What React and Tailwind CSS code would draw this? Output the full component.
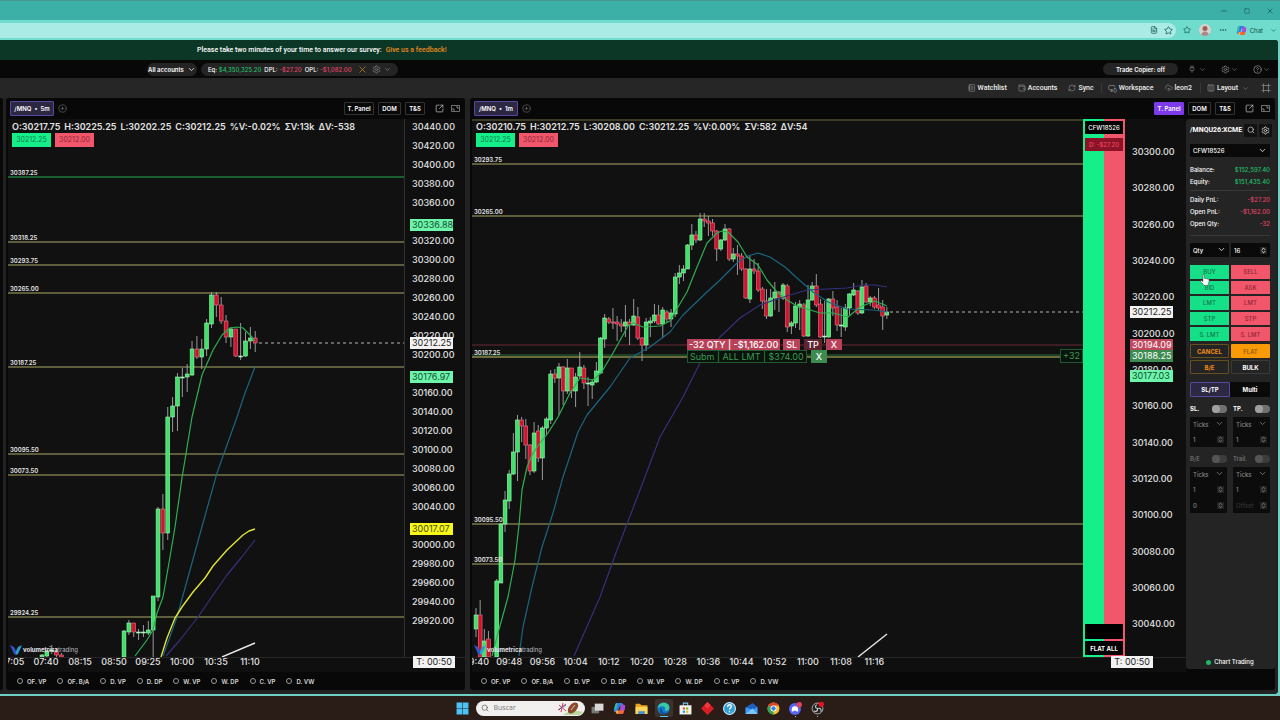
import React, { useState } from "react";
import {
  ChevronDown,
  ChevronsUpDown,
  CircleHelp,
  CirclePlus,
  CloudUpload,
  Columns3,
  Ellipsis,
  FileText,
  Minus,
  MonitorSmartphone,
  NotebookText,
  Plug,
  RefreshCw,
  Search,
  Settings,
  Square,
  SquareArrowOutUpRight,
  Star,
  Wallet,
  X,
} from "lucide-react";

// candle: [top, bottom, high, low, direction]
const leftCandles = [
  [631, 657, 630, 657, 1],
  [623, 632, 620, 635, 1],
  [623, 632, 623, 637, 0],
  [632, 633, 629, 640, 2],
  [632, 633, 625, 637, 2],
  [630, 633, 621, 635, 1],
  [596, 630, 596, 657, 1],
  [509, 597, 507, 601, 1],
  [509, 533, 494, 550, 0],
  [417, 533, 407, 540, 1],
  [406, 417, 397, 432, 1],
  [377, 406, 373, 431, 1],
  [377, 378, 368, 397, 2],
  [374, 377, 364, 392, 1],
  [349, 375, 341, 376, 1],
  [349, 357, 336, 359, 0],
  [349, 357, 339, 369, 1],
  [323, 349, 319, 356, 1],
  [295, 324, 292, 328, 1],
  [295, 305, 292, 317, 0],
  [305, 321, 297, 324, 0],
  [321, 337, 315, 343, 0],
  [329, 337, 327, 347, 1],
  [329, 356, 329, 357, 0],
  [356, 357, 323, 360, 2],
  [341, 356, 332, 357, 1],
  [338, 341, 327, 349, 1],
  [338, 343, 331, 352, 0],
];

const earlyCandles = [
  [655, 657, 654, 657, 1],
  [651, 656, 650, 657, 1],
  [650, 651, 645, 654, 2],
  [652, 655, 650, 657, 0],
  [655, 657, 653, 657, 0],
];

const rightCandles = [
  [615, 629, 608, 637, 1],
  [615, 657, 600, 657, 0],
  [641, 657, 629, 657, 1],
  [639, 657, 631, 657, 0],
  null,
  [581, 657, 579, 657, 1],
  [524, 583, 523, 583, 1],
  [500, 524, 491, 532, 1],
  [474, 501, 470, 509, 1],
  [452, 474, 433, 475, 1],
  [420, 452, 415, 481, 1],
  [420, 426, 417, 442, 0],
  [426, 445, 419, 459, 0],
  [445, 471, 444, 475, 0],
  [433, 471, 422, 473, 1],
  [431, 458, 425, 462, 0],
  [428, 458, 426, 480, 1],
  [419, 428, 417, 435, 1],
  [374, 420, 370, 424, 1],
  [374, 378, 369, 383, 0],
  [367, 378, 363, 415, 1],
  [367, 391, 366, 405, 0],
  [368, 391, 359, 394, 1],
  [368, 391, 368, 398, 0],
  [377, 391, 373, 407, 1],
  [367, 376, 352, 378, 1],
  [368, 383, 365, 389, 0],
  [383, 384, 377, 406, 2],
  [382, 385, 379, 399, 1],
  [371, 382, 362, 383, 1],
  [338, 373, 337, 373, 1],
  [318, 339, 314, 348, 1],
  [319, 322, 317, 324, 0],
  [322, 323, 308, 329, 0],
  [322, 324, 316, 341, 0],
  [324, 326, 319, 332, 0],
  [322, 326, 305, 337, 1],
  [322, 325, 319, 345, 0],
  [316, 325, 299, 326, 1],
  [317, 338, 307, 340, 0],
  [338, 345, 337, 361, 0],
  [322, 345, 318, 351, 1],
  [321, 323, 317, 337, 1],
  [315, 321, 304, 323, 1],
  [315, 324, 305, 325, 0],
  [310, 324, 307, 338, 1],
  [312, 319, 310, 323, 0],
  [313, 319, 309, 327, 1],
  [277, 314, 273, 317, 1],
  [273, 277, 265, 284, 1],
  [269, 273, 265, 281, 1],
  [245, 269, 244, 269, 1],
  [235, 245, 224, 250, 1],
  [235, 240, 231, 243, 0],
  [219, 240, 213, 241, 1],
  [219, 221, 213, 227, 0],
  [221, 223, 216, 236, 0],
  [223, 231, 219, 236, 0],
  [231, 249, 230, 261, 0],
  [240, 249, 239, 251, 1],
  [229, 240, 224, 241, 1],
  [229, 259, 228, 261, 0],
  [254, 259, 248, 262, 1],
  [254, 256, 245, 275, 0],
  [256, 269, 253, 271, 0],
  [269, 298, 268, 299, 0],
  [269, 299, 256, 303, 1],
  [269, 271, 259, 274, 0],
  [271, 290, 263, 292, 0],
  [289, 301, 287, 309, 0],
  [301, 316, 289, 319, 0],
  [298, 316, 289, 317, 1],
  [292, 298, 282, 310, 1],
  [292, 298, 291, 312, 0],
  [285, 298, 283, 300, 1],
  [286, 327, 284, 332, 0],
  [323, 326, 321, 334, 1],
  [306, 323, 302, 328, 1],
  [304, 307, 300, 330, 1],
  [305, 336, 303, 337, 0],
  [300, 336, 285, 337, 1],
  [286, 300, 282, 301, 1],
  [286, 305, 274, 307, 0],
  [304, 337, 299, 338, 0],
  [336, 337, 301, 343, 2],
  [299, 337, 298, 338, 1],
  [299, 308, 291, 316, 0],
  [307, 325, 300, 331, 0],
  [325, 326, 308, 337, 2],
  [308, 327, 304, 331, 1],
  [294, 308, 293, 315, 1],
  [290, 295, 283, 296, 1],
  [291, 313, 290, 315, 0],
  [287, 313, 280, 314, 1],
  [286, 302, 283, 303, 0],
  [298, 302, 296, 306, 1],
  [298, 307, 296, 309, 0],
  [305, 308, 288, 310, 0],
  [307, 316, 300, 330, 0],
  [312, 315, 307, 319, 1],
];

const leftLines = [
  { color: "#2fae52", width: 1.2, points: "135,656 147,640 153,630 157,613 163,597 170,557 175,527 182,478 192,417 202,375 213,350 222,335 230,328 237,327 243,328 252,337 255,341" },
  { color: "#1c6580", width: 1.2, points: "163,656 177,617 190,570 203,523 217,473 237,417 245,393 255,367" },
  { color: "#35307c", width: 1.2, points: "166,656 180,640 198,617 213,595 227,575 241,558 255,540" },
  { color: "#e3e337", width: 1.4, points: "161,657 167,638 175,618 182,607 193,592 205,578 213,566 227,550 243,535 249,531 255,529" },
  { color: "#e8e8e8", width: 1.4, points: "222,657 255,643" },
];

const rightLines = [
  { color: "#35307c", width: 1.2, points: "574,656 600,597 617,550 640,490 660,437 683,397 700,363 720,337 740,318 760,305 780,298 807,290 847,288 863,285 875,285 887,287" },
  { color: "#1c6580", width: 1.2, points: "519,656 523,627 532,587 542,547 553,513 563,477 578,432 587,415 610,387 630,358 650,347 670,332 683,315 707,292 720,280 738,262 748,256 758,253 770,257 785,267 797,278 813,292 828,302 847,309 873,310 887,312" },
  { color: "#2fae52", width: 1.2, points: "492,656 498,633 508,597 515,560 519,525 522,490 527,467 533,453 540,443 548,433 558,417 570,393 580,378 593,380 601,373 613,353 628,326 633,323 643,327 660,326 670,321 675,312 687,292 697,267 707,243 717,233 722,231 728,232 738,242 747,257 758,265 767,280 777,292 787,300 797,306 807,309 820,313 833,313 848,317 860,307 875,301 887,306" },
  { color: "#e8e8e8", width: 1.4, points: "858,657 887,634" },
];

const leftLevels = [
  { price: "30387.25", y: 177, color: "#1d7a3e" },
  { price: "30318.25", y: 242, color: "#77774a" },
  { price: "30293.75", y: 265, color: "#77774a" },
  { price: "30265.00", y: 293, color: "#77774a" },
  { price: "30187.25", y: 367, color: "#77774a" },
  { price: "30095.50", y: 454, color: "#77774a" },
  { price: "30073.50", y: 475, color: "#77774a" },
  { price: "29924.25", y: 617, color: "#77774a" },
];

const rightLevels = [
  { price: "", y: 120, color: "#4c4930" },
  { price: "30293.75", y: 164, color: "#77774a" },
  { price: "30265.00", y: 216, color: "#77774a" },
  { price: "30187.25", y: 357, color: "#8a8a4e" },
  { price: "30095.50", y: 524, color: "#77774a" },
  { price: "30073.50", y: 564, color: "#77774a" },
];

const leftTags = [
  { price: "30336.88", y: 225, bg: "#6df5ab", text: "#11502f" },
  { price: "30212.25", y: 343, bg: "#f2f2f2", text: "#222222" },
  { price: "30176.97", y: 377, bg: "#6df5ab", text: "#11502f" },
  { price: "30017.07", y: 529, bg: "#f7f71a", text: "#4a4a10" },
];

const rightTags = [
  { price: "30212.25", y: 312, bg: "#f2f2f2", text: "#222222" },
  { price: "30194.09", y: 345, bg: "#c0475d", text: "#ffffff" },
  { price: "30188.25", y: 356, bg: "#3c8b50", text: "#ffffff" },
  { price: "30177.03", y: 376, bg: "#6df5ab", text: "#11502f" },
];

const leftTimes = ["07:05", "07:40", "08:15", "08:50", "09:25", "10:00", "10:35", "11:10"];
const rightTimes = ["09:40", "09:48", "09:56", "10:04", "10:12", "10:20", "10:28", "10:36", "10:44", "10:52", "11:00", "11:08", "11:16"];
const studies = ["OF. VP", "OF. B/A", "D. VP", "D. DP", "W. VP", "W. DP", "C. VP", "D. VW"];

const Candles = ({ data, start, step }) =>
  data.map((c, i) => {
    if (!c) return null;
    const [top, bottom, high, low, dir] = c;
    const x = start + i * step;
    const fill = ["#d0122f", "#3fe268", "#e8e8e8"][dir];
    return (
      <g key={i}>
        <line x1={x} x2={x} y1={high} y2={low} stroke="#a9a9a9" strokeWidth="0.9" />
        <rect x={x - 1.9} y={top} width="3.8" height={Math.max(bottom - top, 1)} fill={fill} stroke={dir === 0 ? "#e27a8a" : "#a0f5b4"} strokeWidth="0.6" />
      </g>
    );
  });

const PlotSvg = ({ originX, levels, lines, lastX, lastY, children }) => (
  <svg className="absolute inset-0 h-full w-full overflow-hidden" aria-hidden="true">
    <g transform={`translate(${-originX}, -119)`}>
      {levels.map((l) => (
        <line key={l.y} x1={originX} x2="200%" y1={l.y} y2={l.y} stroke={l.color} strokeWidth="1.5" />
      ))}
      {children}
      {lines.map((l, i) => (
        <polyline key={i} points={l.points} fill="none" stroke={l.color} strokeWidth={l.width} strokeLinejoin="round" />
      ))}
      {levels.map((l) => (
        <text key={l.y} x={originX + 2} y={l.y - 2} fill="#e6e6e6" className="font-[Inter] text-[6px] font-semibold">
          {l.price}
        </text>
      ))}
      <line x1={lastX} x2="200%" y1={lastY} y2={lastY} stroke="#b5b5b5" strokeDasharray="3 3" />
    </g>
  </svg>
);

const PriceAxis = ({ from, to, firstY, pitch, tags }) => {
  const labels = [];
  for (let p = from; p >= to; p -= 20) {
    const y = firstY + (from - p) * pitch;
    // a label that lies right under a tag is not drawn
    if (!tags.some((t) => Math.abs(t.y - y) < 4)) {
      labels.push({ price: p.toFixed(2), y });
    }
  }
  return (
    <svg className="h-full w-full font-[Inter] text-[9px]" aria-hidden="true">
      <g transform="translate(0, -119)">
        {labels.map((l) => (
          <text key={l.price} x="7" y={l.y + 3} fill="#e2e2e2" className="font-medium">
            {l.price}
          </text>
        ))}
        {tags.map((t) => (
          <g key={t.price}>
            <rect x="5" y={t.y - 6} width="43" height="12" fill={t.bg} />
            <text x="7" y={t.y + 3} fill={t.text}>
              {t.price}
            </text>
          </g>
        ))}
      </g>
    </svg>
  );
};

const TimeAxis = ({ times, first, step, tagClass }) => (
  <div className="relative h-[15px] shrink-0 border-t border-[#262626] bg-[#0f0f0f]">
    <div className="h-full overflow-x-clip">
      <svg className="h-full w-full overflow-visible font-[Inter] text-[9px] font-medium" aria-hidden="true">
        {times.map((t, i) => (
          <text key={t} x={first + i * step} y="7" textAnchor="middle" fill="#e2e2e2">
            {t}
          </text>
        ))}
      </svg>
    </div>
    <span className={`absolute -top-[2px] bg-[#f2f2f2] px-[3px] text-[9px] leading-[12px] text-[#222] ${tagClass}`}>T: 00:50</span>
  </div>
);

const Ohlc = ({ values }) => (
  <div className="relative flex gap-[4px] pl-[4px] pt-[2px] text-[9px] font-semibold leading-[12px] text-[#e4e4e4]">
    {values.map((v) => (
      <span key={v}>{v}</span>
    ))}
  </div>
);

const BidAsk = () => (
  <div className="relative flex gap-[4px] pl-[4px] text-[7px] leading-[14px]">
    <span className="w-[39px] bg-[#14ef8a] text-center text-[#147a4a]">30212.25</span>
    <span className="w-[39px] bg-[#f2566a] text-center text-[#8f2636]">30212.00</span>
  </div>
);

const Brand = () => (
  <div className="absolute bottom-[2px] left-[2px] flex items-center gap-[1px] text-[6px] leading-[10px] text-[#b9bcc4]">
    <svg viewBox="0 0 12 10" className="h-[10px] w-3" aria-hidden="true">
      <path d="M0 0 L4 2 L6 6 L6 10 L4 9 Z" fill="#2f55c8" />
      <path d="M12 0 L8 2 L6 6 L6 10 L8 9 Z" fill="#2e9bd0" />
    </svg>
    <span>
      <b className="text-[#e2e4ea]">volumetrica</b>trading
    </span>
  </div>
);

const PanelHeader = ({ frame, active }) => {
  const base = "h-[13px] rounded-[1px] border text-center text-[6px] font-semibold leading-[11px] text-white";
  return (
    <div className="flex h-[21px] shrink-0 items-center pl-[4px] pr-[5px]">
      <button className="h-[15px] w-[44px] rounded-[1px] border border-[#5a46a0] bg-[#2d2842] text-[6px] font-semibold text-white">
        /MNQ&nbsp; • &nbsp;{frame}
      </button>
      <button aria-label="Add chart" className="ml-[4px] text-[#777]">
        <CirclePlus size={9} strokeWidth={1.5} />
      </button>
      <div className="ml-auto flex items-center gap-[4px]">
        <button className={`w-[30px] ${active ? `${base} border-[#7c3aed] bg-[#7c3aed]` : `${base} border-[#333]`}`}>T. Panel</button>
        <button className={`w-[23px] ${base} border-[#333]`}>DOM</button>
        <button className={`w-[20px] ${base} border-[#333]`}>T&amp;S</button>
        <button aria-label="Pop out" className="ml-[6px] text-[#bbb]">
          <SquareArrowOutUpRight size={9} strokeWidth={2} />
        </button>
        <button aria-label="Maximize" className="ml-[3px] text-[#999]">
          <svg viewBox="0 0 9 9" className="size-[9px]" fill="none" stroke="currentColor" aria-hidden="true">
            <path d="M0.500 1.500h8v6h-8Z" strokeWidth="0.7" />
            <path d="M5 3h2v2M4 6H2V4" strokeWidth="0.8" />
          </svg>
        </button>
      </div>
    </div>
  );
};

const PanelFooter = ({ id }) => (
  <div className="flex h-[18px] shrink-0 items-center gap-[11px] pl-[11px] text-[6px] font-semibold text-[#d8d8d8]">
    {studies.map((s) => (
      <label key={s} htmlFor={`${id}-${s}`} className="flex items-center gap-[4px]">
        <input id={`${id}-${s}`} type="checkbox" className="size-[6px] appearance-none rounded-full border border-[#999]" />
        {s}
      </label>
    ))}
  </div>
);

const Picker = ({ label, value, className }) => (
  <div className={`relative ${className}`}>
    <select aria-label={label} className="h-full w-full appearance-none bg-transparent pl-[3px] outline-none">
      <option>{value}</option>
    </select>
    <ChevronDown size={9} strokeWidth={2} className="pointer-events-none absolute right-[3px] top-[2px]" />
  </div>
);

const NumberBox = ({ label, value, placeholder }) => {
  const [val, setVal] = useState(value);
  return (
    <div className="flex h-[14px] items-center pl-[3px] pr-[3px]">
      <input
        type="text"
        inputMode="numeric"
        aria-label={label}
        value={val}
        placeholder={placeholder}
        onChange={(e) => setVal(e.target.value)}
        className="w-full min-w-0 bg-transparent outline-none placeholder:text-[#333]"
      />
      <ChevronsUpDown size={7} strokeWidth={3} className="shrink-0 bg-[#222]" />
    </div>
  );
};

const Toggle = ({ label, dim }) => (
  <label className={dim ? "flex items-center justify-between text-[#777]" : "flex items-center justify-between text-white"}>
    {label}
    <span className="relative flex h-2 w-[15px]">
      <input type="checkbox" className={`h-2 w-[15px] appearance-none rounded-full ${dim ? "bg-[#3c3c3c]" : "bg-[#707070]"}`} />
      <span className={`pointer-events-none absolute left-0 top-0 size-2 rounded-full ${dim ? "bg-[#555]" : "bg-[#a0a0a0]"}`} />
    </span>
  </label>
);

const Row = ({ label, value, color }) => (
  <div className="flex h-3 items-center justify-between">
    <dt className="text-white">{label}</dt>
    <dd className={color}>{value}</dd>
  </div>
);

const TradePanel = () => {
  const sides = [
    ["BUY", "SELL"],
    ["BID", "ASK"],
    ["LMT", "LMT"],
    ["STP", "STP"],
    ["S. LMT", "S. LMT"],
  ];
  return (
    <aside className="relative mb-[3px] flex w-[89px] shrink-0 flex-col rounded-[3px] bg-[#242424] pl-[4px] pr-[5px] pt-[4px] text-[6px] font-medium text-[#ddd]">
      <div className="flex h-[14px] items-center gap-[2px]">
        <b className="flex-1 whitespace-nowrap font-[Roboto] text-[7px] font-bold text-white">/MNQU26:XCME</b>
        <button aria-label="Search symbol" className="flex size-[13px] shrink-0 items-center justify-center bg-[#111]">
          <Search size={8} />
        </button>
        <button aria-label="Panel settings" className="flex size-[13px] shrink-0 items-center justify-center bg-[#111]">
          <Settings size={9} strokeWidth={2} />
        </button>
      </div>
      <Picker label="Account" value="CFW18526" className="mt-[7px] h-[13px] bg-[#0a0a0a] text-white" />
      <dl className="mt-[6px] border-b border-[#383838] pb-[3px]">
        <Row label="Balance:" value="$152,597.40" color="text-[#22c06a]" />
        <Row label="Equity:" value="$151,435.40" color="text-[#22c06a]" />
      </dl>
      <dl className="mt-[2px] border-b border-[#383838] pb-[6px]">
        <Row label="Daily PnL:" value="-$27.20" color="text-[#e8456a]" />
        <Row label="Open PnL:" value="-$1,162.00" color="text-[#e8456a]" />
        <Row label="Open Qty:" value="-32" color="text-[#e8456a]" />
      </dl>
      <div className="mt-[7px] grid grid-cols-2 gap-[2px] text-white">
        <Picker label="Quantity type" value="Qty" className="h-[14px] bg-[#0a0a0a]" />
        <div className="bg-[#0a0a0a]">
          <NumberBox label="Quantity" value="16" />
        </div>
      </div>
      <div className="mt-[8px] grid h-[76px] grid-cols-2 gap-[2px]">
        {sides.map(([buy, sell], i) => (
          <React.Fragment key={i}>
            <button className="bg-[#16e087] text-[#12774a]">{buy}</button>
            <button className="bg-[#f2566a] text-[#8f2636]">{sell}</button>
          </React.Fragment>
        ))}
      </div>
      <div className="mt-[3px] grid grid-cols-2 gap-[2px] font-bold">
        <button className="h-[14px] rounded-[1px] border border-[#66501c] text-[#f08c1a]">CANCEL</button>
        <button className="h-[14px] rounded-[1px] bg-[#f99a07] font-medium text-[#8a5200]">FLAT</button>
        <button className="h-[14px] rounded-[1px] border border-[#66501c] text-[#f08c1a]">B/E</button>
        <button className="h-[14px] rounded-[1px] border border-[#3a3a3a] text-white">BULK</button>
      </div>
      <div className="mt-[8px] grid grid-cols-2 font-bold text-white">
        <button className="h-[15px] rounded-[1px] border border-[#5a46a0] bg-[#2d2842]">SL/TP</button>
        <button className="h-[15px] bg-[#0a0a0a]">Multi</button>
      </div>
      <div className="mt-[8px] grid grid-cols-2 gap-[6px] font-bold leading-[8px]">
        <Toggle label="SL." />
        <Toggle label="TP." />
      </div>
      <div className="mt-[4px] grid grid-cols-2 gap-[6px] text-[#888]">
        {["SL", "TP"].map((n) => (
          <div key={n} className="bg-[#0c0c0c] pb-[1px]">
            <Picker label={`${n} unit`} value="Ticks" className="h-[15px]" />
            <NumberBox label={`${n} ticks`} value="1" />
          </div>
        ))}
      </div>
      <div className="mt-[8px] grid grid-cols-2 gap-[6px] leading-[8px]">
        <Toggle label="B/E" dim />
        <Toggle label="Trail." dim />
      </div>
      <div className="mt-[4px] grid grid-cols-2 gap-[6px] text-[#888]">
        {["B/E", "Trail"].map((n, i) => (
          <div key={n} className="bg-[#0c0c0c] pb-[1px]">
            <Picker label={`${n} unit`} value="Ticks" className="h-[15px]" />
            <NumberBox label={`${n} ticks`} value="1" />
            <div className="pt-[2px]">
              <NumberBox label={`${n} offset`} value={i ? "" : "0"} placeholder="Offset" />
            </div>
          </div>
        ))}
      </div>
      <div className="mt-auto flex items-center justify-center gap-[3px] pb-[3px] text-white leading-[8px]">
        <span className="size-[5px] rounded-full bg-[#1fb866]" />
        Chart Trading
      </div>
      <svg viewBox="0 0 12 14" className="pointer-events-none absolute left-[14px] top-[155px] h-3 w-[10px]" aria-hidden="true">
        <path d="M3.500 1.200c0-1 1.700-1 1.700 0V5l4.600.9c1 .2 1.400.8 1.200 1.800L10.300 11 9.500 13.500H4.800L1 8.800c-.7-1 .5-1.700 1.300-1l1.200 1.100Z" fill="#fff" stroke="#333" strokeWidth="0.6" />
      </svg>
    </aside>
  );
};

const Ladder = () => (
  <div className="flex w-[42px] shrink-0 flex-col bg-[linear-gradient(90deg,#14ef8a_50%,#f2566a_50%)] px-[2px] pb-[2px] pt-[2px] text-center text-[6px] font-medium">
    <div className="h-[13px] bg-black leading-[13px] text-white">CFW18526</div>
    <div className="mt-[4px] h-[13px] bg-[#8c1327] leading-[13px] text-[#ee4b64]">D: -$27.20</div>
    <div className="mt-auto h-[15px] bg-black" />
    <button className="mt-[2px] h-[14px] bg-black font-bold text-white">FLAT ALL</button>
  </div>
);

const LeftChart = () => (
  <section className="flex w-[36%] shrink-0 flex-col rounded-[3px] bg-[#080808]">
    <PanelHeader frame="5m" />
    <div className="flex flex-1 flex-col pl-[2px]">
      <div className="flex flex-1">
        <div className="relative flex-1 overflow-hidden border-r border-[#303030] bg-[#111]">
          <PlotSvg originX={8} levels={leftLevels} lines={leftLines} lastX={259} lastY={343}>
            <Candles data={earlyCandles} start={42} step={4.86} />
            <Candles data={leftCandles} start={124} step={4.86} />
          </PlotSvg>
          <Ohlc values={["O:30217.75", "H:30225.25", "L:30202.25", "C:30212.25", "%V:-0.02%", "ΣV:13k", "ΔV:-538"]} />
          <BidAsk />
          <Brand />
        </div>
        <div className="w-[60px] shrink-0 bg-[#0f0f0f]">
          <PriceAxis from={30440} to={29920} firstY={127} pitch={0.95} tags={leftTags} />
        </div>
      </div>
      <TimeAxis times={leftTimes} first={4} step={34} tagClass="right-[10px]" />
    </div>
    <PanelFooter id="left" />
  </section>
);

const OrderTags = () => (
  <div className="absolute left-[215px] top-[220px] text-[9px] leading-[11px]">
    <div className="flex items-center font-medium text-white">
      <span className="whitespace-nowrap bg-[#b9425a] px-[2px]">-32 QTY | -$1,162.00</span>
      <button className="ml-[3px] bg-[#b9425a] px-[3px]">SL</button>
      <button className="ml-[4px] bg-[#5e2430] px-[3px]">TP</button>
      <button className="ml-[4px] bg-[#b9425a] px-[5px]">X</button>
    </div>
    <div className="flex items-center text-[#3c9a55]">
      <span className="whitespace-nowrap border border-[#1f5a30] bg-[#0a130c] px-[2px]">Subm | ALL LMT | $374.00</span>
      <button className="ml-[4px] bg-[#3c8b50] px-[5px] font-medium leading-[13px] text-white">X</button>
    </div>
  </div>
);

const RightChart = () => (
  <section className="flex min-w-0 flex-1 flex-col rounded-[3px] bg-[#080808]">
    <PanelHeader frame="1m" active />
    <div className="flex flex-1">
      <div className="flex min-w-0 flex-1 flex-col pl-[2px]">
        <div className="flex flex-1">
          <div className="relative flex-1 overflow-hidden bg-[#111]">
            <PlotSvg originX={472} levels={rightLevels} lines={rightLines} lastX={890} lastY={312}>
              <line x1="472" x2="200%" y1="345" y2="345" stroke="#6b2a37" />
              <line x1="472" x2="200%" y1="355" y2="355" stroke="#2c6a3a" />
              <Candles data={rightCandles} start={476} step={4.15} />
            </PlotSvg>
            <Ohlc values={["O:30210.75", "H:30212.75", "L:30208.00", "C:30212.25", "%V:0.00%", "ΣV:582", "ΔV:54"]} />
            <BidAsk />
            <OrderTags />
            <span className="absolute right-0 top-[230px] border border-[#1f5a30] bg-[#0a130c] px-[2px] text-[9px] leading-[12px] text-[#3c9a55]">+32</span>
            <Brand />
          </div>
          <Ladder />
          <div className="w-[61px] shrink-0 bg-[#0f0f0f]">
            <PriceAxis from={30300} to={30040} firstY={152} pitch={1.817} tags={rightTags} />
          </div>
        </div>
        <TimeAxis times={rightTimes} first={4} step={33.2} tagClass="right-[33px]" />
      </div>
      <TradePanel />
    </div>
    <PanelFooter id="right" />
  </section>
);

const BrowserChrome = () => (
  <header className="shrink-0 text-[#12504b]">
    <div className="flex h-5 items-center justify-end gap-[12px] border-t border-[#45968f] bg-[#3cb0a7] pr-[6px]">
      <button aria-label="Minimize window"><Minus size={8} /></button>
      <button aria-label="Restore window" className="ml-1"><Square size={6} /></button>
      <button aria-label="Close window" className="ml-1"><X size={8} /></button>
    </div>
    <div className="flex h-5 items-center bg-[#70dccd] pr-[3px]">
      <div className="flex h-[15px] flex-1 items-center justify-end gap-[6px] rounded-r-full bg-[#aaece5] pr-[3px]">
        <FileText size={8} />
        <Star size={9} />
      </div>
      <Star size={8} className="ml-[7px]" />
      <span className="ml-[8px] flex size-[12px] items-end justify-center overflow-hidden rounded-full bg-[#d9d3cf]">
        <svg viewBox="0 0 12 12" className="size-3" aria-hidden="true">
          <circle cx="6" cy="4.500" r="2.500" fill="#9a5f57" />
          <path d="M2 12c0-6 8-6 8 0Z" fill="#a88" />
        </svg>
      </span>
      <Ellipsis size={8} className="ml-[8px]" />
      <span className="ml-[9px]"><CopilotIcon size={11} /></span>
      <button className="ml-[3px] text-[6px]">Chat</button>
      <ChevronDown size={7} className="ml-[7px]" />
    </div>
  </header>
);

const CopilotIcon = ({ size }) => (
  <svg viewBox="0 0 24 24" width={size} height={size} aria-hidden="true">
    <path d="M7 2h8c2 0 3 1 3.500 3l1 3h-5c-2 0-3 1-3.500 3l-2 8H5c-3 0-4-2-3-5L4 5c.5-2 1.500-3 3-3Z" fill="#2d7fe8" />
    <path d="M2 14 4 6c.5-2 1.500-4 4-4l-2 12Z" fill="#35c48c" />
    <path d="M17 22H9c-2 0-3-1-3.500-3l-1-3h5c2 0 3-1 3.500-3l2-8h4c3 0 4 2 3 5l-2 9c-.5 2-1.500 3-3 3Z" fill="#f0643c" />
    <path d="M15 5h4c3 0 4 2 3 5l-1 5h-8Z" fill="#a44be0" />
    <path d="M5 16h5l-1 6c-2 0-3-1-3.500-3Z" fill="#f5b82e" />
  </svg>
);

const AccountBar = () => (
  <div className="flex h-[18px] shrink-0 items-center bg-[#080808] pl-[147px] pr-[8px] text-[6px] font-medium text-white">
    <button className="flex h-[13px] w-[50px] items-center justify-center gap-[3px] whitespace-nowrap rounded-full bg-[#242424] font-semibold">
      All accounts <ChevronDown size={9} />
    </button>
    <div className="ml-[4px] flex h-[13px] w-[197px] items-center gap-[3px] rounded-full bg-[#242424] pl-[7px]">
      <span>Eq: <span className="text-[#22c06a]">$4,350,325.20</span></span>
      <span>DPL: <span className="text-[#e8456a]">-$27.20</span></span>
      <span>OPL: <span className="text-[#e8456a]">-$1,082.00</span></span>
      <X size={11} strokeWidth={1.5} className="ml-[2px] text-[#c88a1c]" />
      <Settings size={9} strokeWidth={1.5} className="ml-[1px] text-[#999]" />
      <ChevronDown size={7} className="text-[#999]" />
    </div>
    <button className="ml-auto h-3 w-[75px] rounded-full bg-[#242424] font-semibold">Trade Copier: off</button>
    <div className="ml-[10px] flex items-center text-[#888]">
      <Plug size={8} /><ChevronDown size={7} className="ml-[3px]" />
      <Settings size={9} className="ml-[15px]" /><ChevronDown size={7} className="ml-[1px]" />
      <CircleHelp size={9} className="ml-[15px]" /><ChevronDown size={7} className="ml-[1px]" />
    </div>
  </div>
);

const Toolbar = () => (
  <nav className="flex h-5 shrink-0 items-center justify-end bg-[#262626] pr-[7px] font-[Roboto] text-[7px] font-medium text-[#eee] [&_svg]:text-[#888]">
    <button className="flex items-center gap-[2px]"><NotebookText size={8} /> Watchlist</button>
    <button className="ml-[11px] flex items-center gap-[2px]"><Wallet size={8} /> Accounts</button>
    <button className="ml-[11px] flex items-center gap-[2px]"><RefreshCw size={8} /> Sync</button>
    <button className="ml-[7px] flex items-center gap-[2px] border-l border-[#383838] pl-[6px]"><MonitorSmartphone size={9} /> Workspace</button>
    <button className="ml-[11px] flex items-center gap-[2px]"><CloudUpload size={8} /> leon2</button>
    <button className="ml-[8px] flex items-center gap-[2px] border-l border-[#383838] pl-[6px]">
      <Columns3 size={8} /> Layout <ChevronDown size={7} className="ml-[2px]" />
    </button>
    <button aria-label="Full screen" className="ml-[12px]">
      <svg viewBox="0 0 10 10" className="size-[10px]" fill="none" stroke="currentColor" strokeWidth="0.8" aria-hidden="true">
        <path d="M2.500 2.500h5v5h-5ZM0.500 2.500h2v-2M9.500 2.500h-2v-2M0.500 7.500h2v2M9.500 7.500h-2v2" />
      </svg>
    </button>
  </nav>
);

const TaskIcon = ({ label, active, dot, children }) => (
  <button aria-label={label} className={`relative flex size-[18px] items-center justify-center rounded-[2px] ${active ? "bg-[#3c322e]" : ""}`}>
    <svg viewBox="0 0 24 24" className="size-[13px]" aria-hidden="true">{children}</svg>
    {active && <span className="absolute bottom-0 h-px w-2 bg-[#5ec4f0]" />}
    {dot && <span className="absolute bottom-0 size-px bg-[#bbb]" />}
  </button>
);

const Taskbar = () => (
  <footer className="flex h-6 shrink-0 items-center justify-center gap-[4px] bg-[#2a1c17]">
    <TaskIcon label="Start">
      <path d="M1 1h10.500v10.500H1ZM12.500 1H23v10.500H12.500ZM1 12.500h10.500V23H1ZM12.500 12.500H23V23H12.500Z" fill="#4cc2f5" />
    </TaskIcon>
    <label className="flex h-[15px] w-[109px] items-center rounded-full bg-[#f1f0ee] pl-[5px] pr-[2px] text-[#555]">
      <Search size={8} className="shrink-0" />
      <input type="search" aria-label="Buscar" placeholder="Buscar" className="ml-[5px] w-full min-w-0 bg-transparent font-[Open_Sans] text-[7px] outline-none placeholder:text-[#777]" />
      <svg viewBox="0 0 26 14" className="h-[14px] w-[26px] shrink-0" aria-hidden="true">
        <path d="M6 14c4-4 14-5 20-3-1 2-3 3-5 3Z" fill="#b9d8a0" />
        <path d="m2 4 7 6M6 2 4 11M9 3 1 9" stroke="#d23c5a" />
        <path d="m2 9 3-3M6 6l3-2" stroke="#2c72c8" />
        <ellipse cx="16" cy="7" rx="6.500" ry="4" transform="rotate(-50 16 7)" fill="#8c4a2c" />
        <path d="m14 9 4-5" stroke="#f3e6da" strokeWidth="0.8" />
      </svg>
    </label>
    <TaskIcon label="Task view">
      <path d="M1 9h14v12H1Z" fill="#777" /><path d="M7 3h16v13H7Z" fill="#d9d9d9" />
    </TaskIcon>
    <TaskIcon label="Copilot">
      <path d="M7 2h8c2 0 3 1 3.500 3l1 3h-5c-2 0-3 1-3.500 3l-2 8H5c-3 0-4-2-3-5L4 5c.5-2 1.500-3 3-3Z" fill="#2d7fe8" />
      <path d="M2 14 4 6c.5-2 1.500-4 4-4l-2 12Z" fill="#35c48c" />
      <path d="M17 22H9c-2 0-3-1-3.500-3l-1-3h5c2 0 3-1 3.500-3l2-8h4c3 0 4 2 3 5l-2 9c-.5 2-1.500 3-3 3Z" fill="#f0643c" />
      <path d="M15 5h4c3 0 4 2 3 5l-1 5h-8Z" fill="#a44be0" />
      <path d="M5 16h5l-1 6c-2 0-3-1-3.500-3Z" fill="#f5b82e" />
    </TaskIcon>
    <TaskIcon label="Files">
      <path d="M1 3h8l3 3h11v16H1Z" fill="#e8a520" /><path d="M1 9h22v13H1Z" fill="#fbd45c" /><path d="M6 17h12v5H6Z" fill="#3c8fd8" />
    </TaskIcon>
    <TaskIcon label="Edge" active>
      <circle cx="12" cy="12" r="11" fill="#1778c8" /><path d="M1 12C2-1 22-2 23 10c0 6-6 7-9 5 3-4-1-8-5-7-4 0-7 2-8 4Z" fill="#38c9a8" /><path d="M9 12c-2 7 5 9 11 7-5 6-17 4-14-5 1-3 4-3 3-2Z" fill="#0d4f9c" />
    </TaskIcon>
    <TaskIcon label="Store">
      <path d="M8 6V2h8v4" fill="none" stroke="#7ac7f0" strokeWidth="2" /><path d="M1 6h22v17H1Z" fill="#eef2f5" /><path d="M7 10h4v4H7Z" fill="#f05022" /><path d="M13 10h4v4h-4Z" fill="#7fba00" /><path d="M7 16h4v4H7Z" fill="#00a4ef" /><path d="M13 16h4v4h-4Z" fill="#ffb900" />
    </TaskIcon>
    <TaskIcon label="Remote desktop">
      <path d="M12 0 24 12 12 24 0 12Z" fill="#d81f26" /><path d="M12 0 18 6 12 12 6 6Z" fill="#f03a3e" />
    </TaskIcon>
    <TaskIcon label="Help">
      <circle cx="12" cy="12" r="11" fill="#2f9fd6" stroke="#cfeaf7" strokeWidth="2" /><path d="M8.500 9c0-5 7-5 7-1 0 3-3.500 3-3.500 6M12 16v3" fill="none" stroke="#fff" strokeWidth="2.500" />
    </TaskIcon>
    <TaskIcon label="Mail">
      <path d="M1 10 14 2l9 7v13H1Z" fill="#1f5fc0" /><path d="M1 10l13 4 9-5v13H1Z" fill="#3f9bee" /><path d="M1 22 14 12l9 10Z" fill="#7cc4fa" />
    </TaskIcon>
    <TaskIcon label="Chrome">
      <circle cx="12" cy="12" r="11" fill="#f3c12c" /><path d="M12 12 2.500 6.500A11 11 0 0 1 21.500 6.500H12Z" fill="#e0402f" /><path d="M12 12 12 23A11 11 0 0 1 2.500 6.500Z" fill="#2fa350" /><circle cx="12" cy="12" r="5.500" fill="#fff" /><circle cx="12" cy="12" r="4" fill="#3b7de8" />
    </TaskIcon>
    <TaskIcon label="Discord" dot>
      <circle cx="11" cy="13" r="11" fill="#5865f2" /><path d="M5 17c0-8 2-9 6-9s6 1 6 9c-2 1-3 1-4-1H9c-1 2-2 2-4 1Z" fill="#fff" /><circle cx="19" cy="5" r="5" fill="#e2405c" />
    </TaskIcon>
    <TaskIcon label="Recorder" dot>
      <circle cx="12" cy="12" r="10" fill="#222" stroke="#ccc" strokeWidth="1.500" /><path d="M12 12c-5-1-5-6-1-7M12 12c5-2 8 2 6 6M12 12c1 5-4 7-7 4" fill="none" stroke="#ccc" strokeWidth="2" /><circle cx="19" cy="4" r="5" fill="#e81123" />
    </TaskIcon>
  </footer>
);

export default function App() {
  return (
    <div className="flex min-h-screen flex-col bg-[#70cfc3] font-[Inter,sans-serif]">
      <BrowserChrome />
      <main className="mb-[2px] mr-[2px] flex flex-1 flex-col overflow-hidden rounded-br-[4px] rounded-tr-[3px] bg-[#222b2b]">
        <div className="flex h-5 shrink-0 items-center bg-[#0c3727] pl-[197px] font-[Roboto] text-[7px] font-medium text-white">
          <span>Please take two minutes of your time to answer our survey:</span>
          <a href="#survey" className="ml-[4px] text-[#e88a1c]">Give us a feedback!</a>
        </div>
        <AccountBar />
        <Toolbar />
        <div className="flex flex-1 bg-[#222] pb-[4px] pr-[3px]">
          <div className="mr-[3px] w-[3px] shrink-0 rounded-r-[2px] bg-[#080808]" />
          <LeftChart />
          <div className="w-[5px] shrink-0" />
          <RightChart />
        </div>
      </main>
      <Taskbar />
    </div>
  );
}
